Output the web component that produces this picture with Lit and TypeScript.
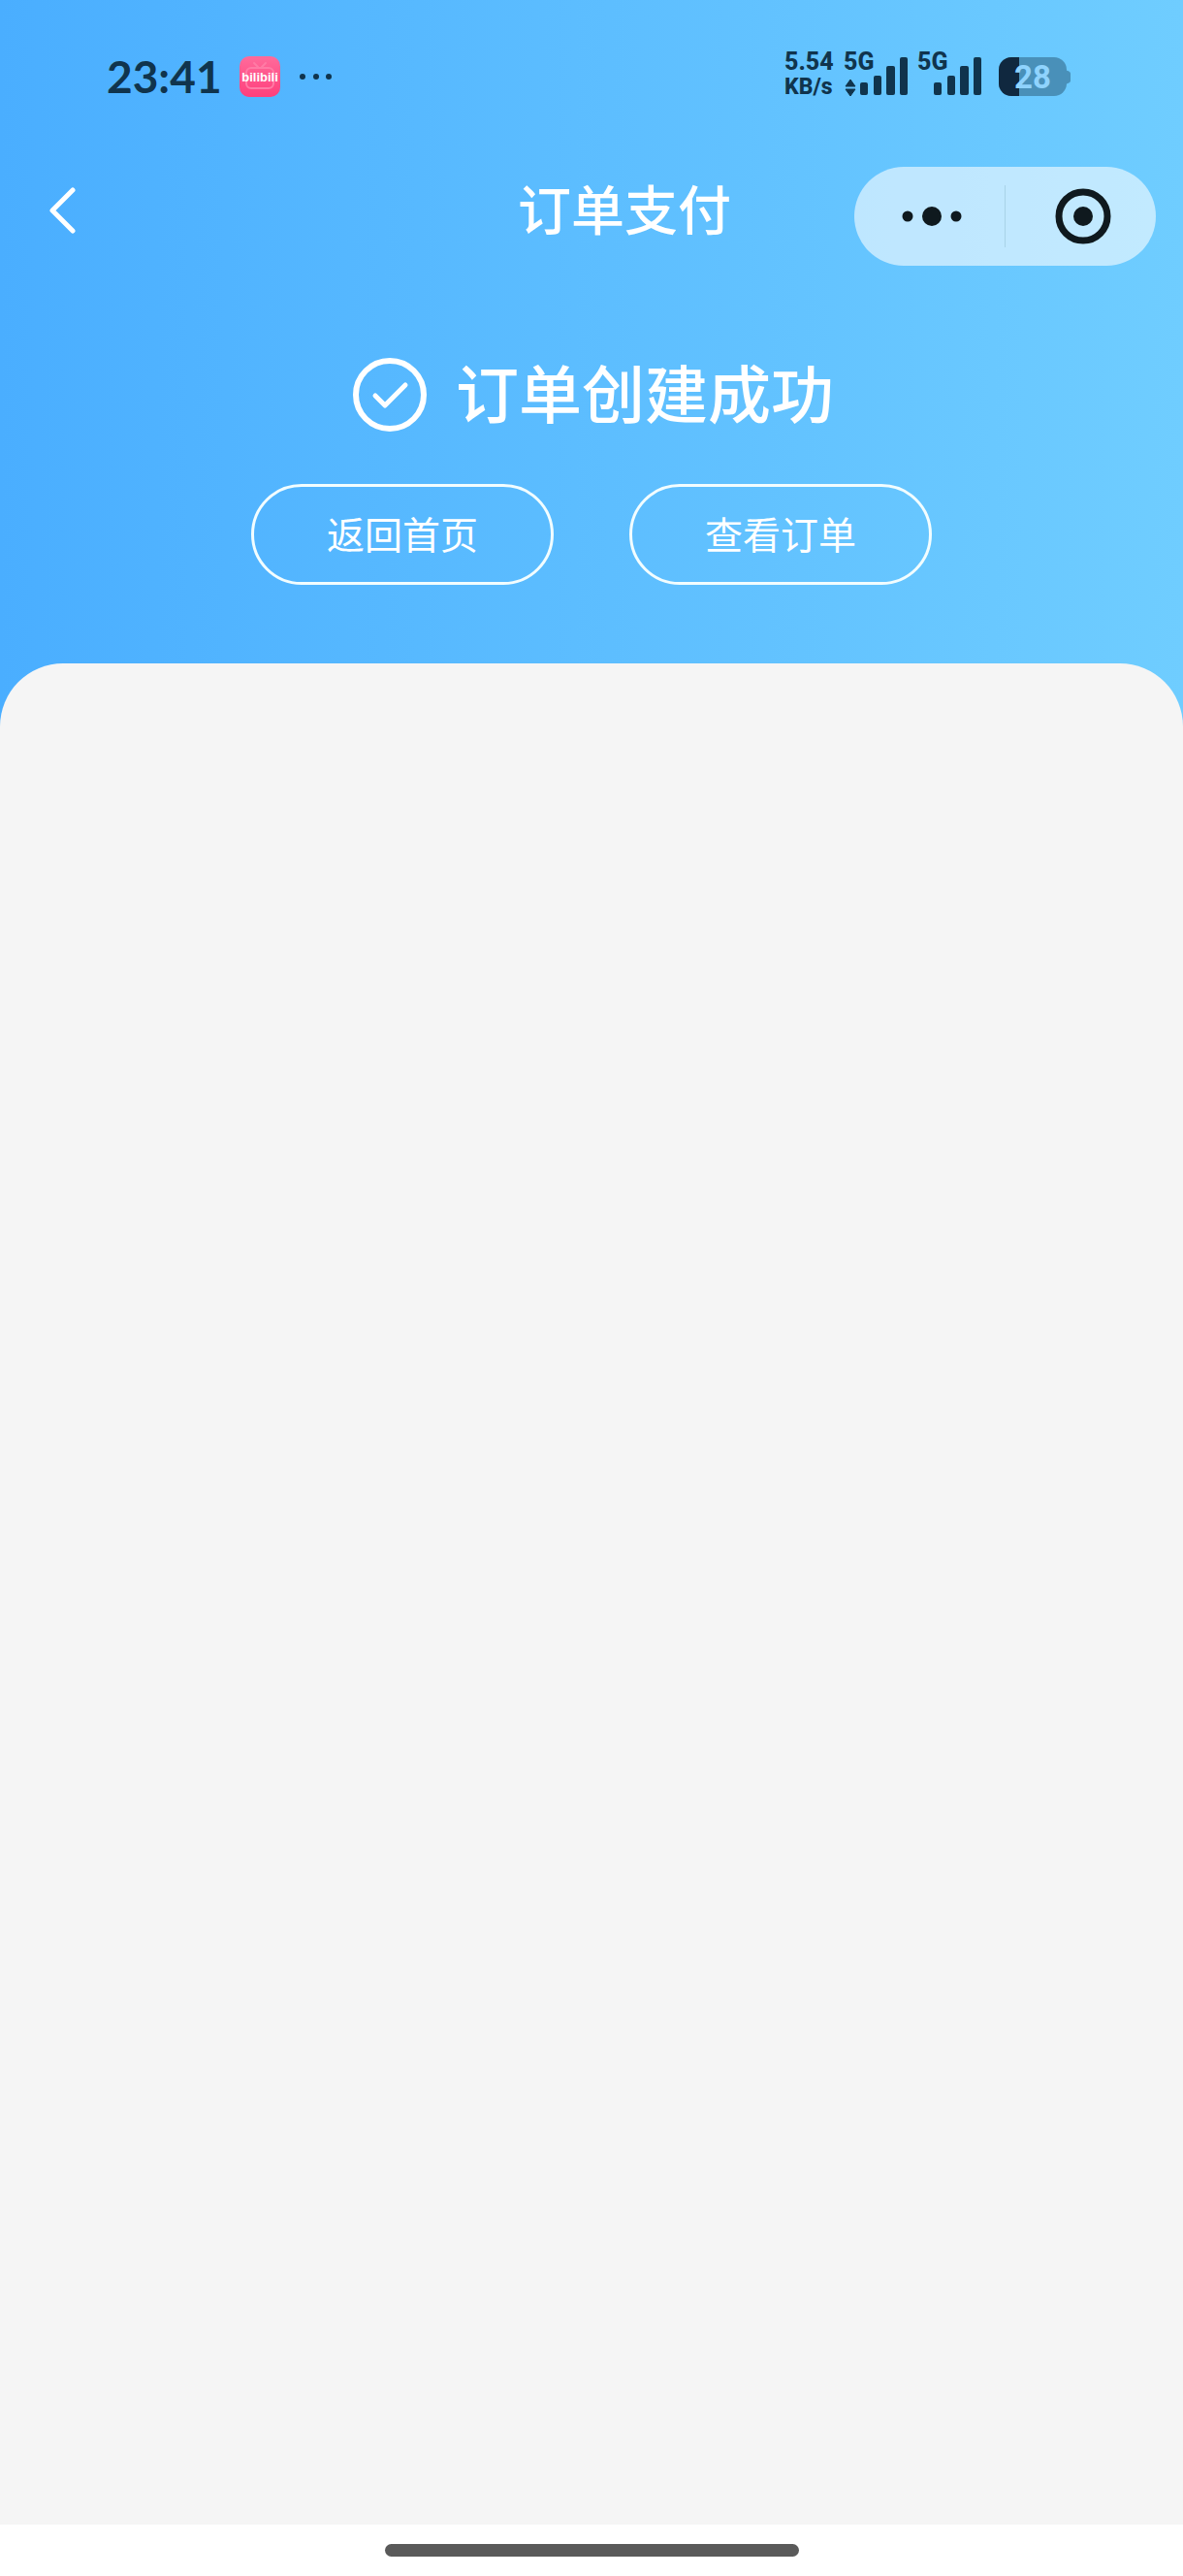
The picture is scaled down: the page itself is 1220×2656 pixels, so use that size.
import { LitElement, html, css, svg } from "lit";
import { customElement, property } from "lit/decorators.js";

@customElement("signal-meter")
class SignalMeter extends LitElement {
  @property({ type: Boolean }) data = false;

  static styles = css`
    :host {
      display: grid;
      grid-template-areas: "cell";
      height: 48px;
    }
    .label {
      grid-area: cell;
      font-size: 25px;
      font-weight: 800;
      line-height: 18px;
    }
    .bars {
      grid-area: cell;
      display: block;
      fill: currentColor;
    }
  `;

  render() {
    return html`
      <svg class="bars" width="66" height="48" viewBox="0 0 66 48" aria-hidden="true">
        ${this.data
          ? svg`<path d="M7 27 L12 34 H2 Z M2 37 H12 L7 44 Z" stroke="currentColor" stroke-width="1" stroke-linejoin="round" />`
          : null}
        <rect x="17" y="30" width="8" height="13" rx="2" />
        <rect x="31" y="23" width="8" height="20" rx="2" />
        <rect x="44" y="13" width="9" height="30" rx="2" />
        <rect x="58" y="4" width="8" height="39" rx="2" />
      </svg>
      <span class="label">5G</span>
    `;
  }
}

@customElement("status-bar")
class StatusBar extends LitElement {
  static styles = css`
    :host {
      display: flex;
      align-items: center;
      justify-content: space-between;
      height: 158px;
      padding: 0 116px 0 110px;
      box-sizing: border-box;
      color: #10344d;
      font-family: Roboto, sans-serif;
    }
    .side {
      display: flex;
      align-items: center;
    }
    .time {
      font-family: Lato, sans-serif;
      font-size: 46px;
      font-weight: 700;
      line-height: 48px;
    }
    .app {
      display: block;
      margin: 0 20px 0 18px;
    }
    .wordmark {
      font: 700 13px "Liberation Sans Narrow", "Liberation Sans", sans-serif;
    }
    .more,
    .battery {
      display: block;
    }
    .battery {
      overflow: visible;
    }
    .speed {
      display: flex;
      flex-direction: column;
      width: 61px;
      padding-bottom: 4px;
      font-size: 25px;
      font-weight: 800;
      line-height: 26px;
    }
    .unit {
      font-size: 23px;
    }
    .signals {
      display: flex;
      gap: 10px;
      margin-right: 18px;
    }
    .level {
      font: 700 33px Roboto, sans-serif;
    }
  `;

  render() {
    return html`
      <div class="side">
        <time class="time">23:41</time>
        <svg class="app" width="42" height="42" viewBox="0 0 42 42">
          <defs>
            <linearGradient id="pink" x1="0" y1="0" x2="0" y2="1">
              <stop offset="0" stop-color="#ff6b9b" />
              <stop offset="1" stop-color="#ff3f7c" />
            </linearGradient>
          </defs>
          <rect width="42" height="42" rx="10" fill="url(#pink)" />
          <g fill="none" stroke="#ff7ba5" stroke-width="2" stroke-linecap="round">
            <rect x="7" y="12" width="28" height="21" rx="5" />
            <path d="M15 7 L19 11 M27 7 L23 11" />
          </g>
          <text class="wordmark" x="21" y="26" text-anchor="middle" fill="#fff">bilibili</text>
        </svg>
        <svg class="more" width="34" height="8" viewBox="0 0 34 8" fill="currentColor" aria-hidden="true">
          <circle cx="3" cy="4" r="3" />
          <circle cx="17" cy="4" r="3" />
          <circle cx="30" cy="4" r="3" />
        </svg>
      </div>
      <div class="side">
        <div class="speed"><span>5.54</span><span class="unit">KB/s</span></div>
        <div class="signals">
          <signal-meter data></signal-meter>
          <signal-meter></signal-meter>
        </div>
        <svg class="battery" width="74" height="40" viewBox="0 0 74 40">
          <defs>
            <clipPath id="cell"><rect width="70" height="40" rx="13" /></clipPath>
          </defs>
          <path d="M69 13 C70 14 74 14 74 17 V24 C74 27 70 27 69 28 Z" fill="#4990b9" />
          <g clip-path="url(#cell)">
            <rect width="70" height="40" fill="#4990b9" />
            <rect width="21" height="40" fill="#10283f" />
          </g>
          <text class="level" x="35" y="32" text-anchor="middle" fill="#8fd3fd">28</text>
        </svg>
      </div>
    `;
  }
}

@customElement("app-root")
class AppRoot extends LitElement {
  static styles = css`
    :host {
      display: flex;
      flex-direction: column;
      min-height: 100vh;
      background: linear-gradient(to right, #4aaeff, #6fcdff) top / 100% 800px no-repeat #fff;
      color: #fff;
      font-family: "Noto Sans CJK SC", sans-serif;
    }
    button {
      margin: 0;
      padding: 0;
      border: 0;
      background: none;
      color: inherit;
      font: inherit;
      cursor: pointer;
    }
    svg {
      display: block;
    }
    .nav {
      display: grid;
      grid-template-columns: 1fr auto 311px;
      column-gap: 127px;
      align-items: center;
      padding: 14px 28px 0 0;
    }
    .back {
      justify-self: start;
      padding: 0 40px 12px 47px;
    }
    .title {
      margin: 0;
      padding-bottom: 20px;
      font-size: 55px;
      font-weight: 500;
      line-height: 64px;
      white-space: nowrap;
    }
    .capsule {
      display: flex;
      align-items: center;
      height: 102px;
      border-radius: 51px;
      background: rgb(255 255 255 / 58%);
      color: #0f191e;
    }
    .half {
      display: flex;
      flex: 1;
      align-items: center;
      justify-content: center;
      height: 64px;
    }
    .half + .half {
      padding-left: 4px;
      border-left: 1px solid #a9d3e8;
    }
    .half:first-child {
      padding-left: 4px;
    }
    .result {
      display: flex;
      align-items: center;
      justify-content: center;
      gap: 30px;
      padding: 85px 0 0 4px;
    }
    .message {
      margin: 0;
      padding-bottom: 8px;
      font-size: 65px;
      font-weight: 500;
      line-height: 88px;
    }
    .actions {
      display: flex;
      justify-content: center;
      gap: 78px;
      padding: 44px 0 81px;
    }
    .action {
      width: 312px;
      height: 104px;
      padding-bottom: 4px;
      border: 3px solid #f2fdff;
      border-radius: 52px;
      font-size: 39px;
      line-height: 56px;
    }
    .sheet {
      flex: 1;
      border-radius: 65px 65px 0 0;
      background: #f5f5f5;
    }
    .home {
      display: flex;
      justify-content: center;
      padding: 20px 0;
      background: #fff;
    }
    .handle {
      width: 35%;
      height: 13px;
      border-radius: 7px;
      background: #5a5a5a;
    }
  `;

  render() {
    return html`
      <status-bar></status-bar>
      <header class="nav">
        <button class="back" type="button" aria-label="返回">
          <svg width="34" height="48" viewBox="0 0 34 48" fill="none" stroke="currentColor" stroke-width="5" stroke-linecap="round" stroke-linejoin="round">
            <path d="M28 3 L7 24 L28 45" />
          </svg>
        </button>
        <h1 class="title">订单支付</h1>
        <div class="capsule">
          <button class="half" type="button" aria-label="更多">
            <svg width="62" height="20" viewBox="0 0 62 20" fill="currentColor">
              <circle cx="6" cy="10" r="5.500" />
              <circle cx="31" cy="10" r="10" />
              <circle cx="56" cy="10" r="5.500" />
            </svg>
          </button>
          <button class="half" type="button" aria-label="关闭">
            <svg width="58" height="58" viewBox="0 0 58 58">
              <circle cx="29" cy="29" r="25" fill="none" stroke="currentColor" stroke-width="7" />
              <circle cx="29" cy="29" r="10" fill="currentColor" />
            </svg>
          </button>
        </div>
      </header>
      <section class="result">
        <svg width="76" height="76" viewBox="0 0 76 76" fill="none" stroke="currentColor" stroke-linecap="round" stroke-linejoin="round" aria-hidden="true">
          <circle cx="38" cy="38" r="35" stroke-width="6" />
          <path d="M23 39 L33 49 L54 28" stroke-width="5" />
        </svg>
        <h2 class="message">订单创建成功</h2>
      </section>
      <div class="actions">
        <button class="action" type="button">返回首页</button>
        <button class="action" type="button">查看订单</button>
      </div>
      <main class="sheet"></main>
      <footer class="home"><div class="handle"></div></footer>
    `;
  }
}
